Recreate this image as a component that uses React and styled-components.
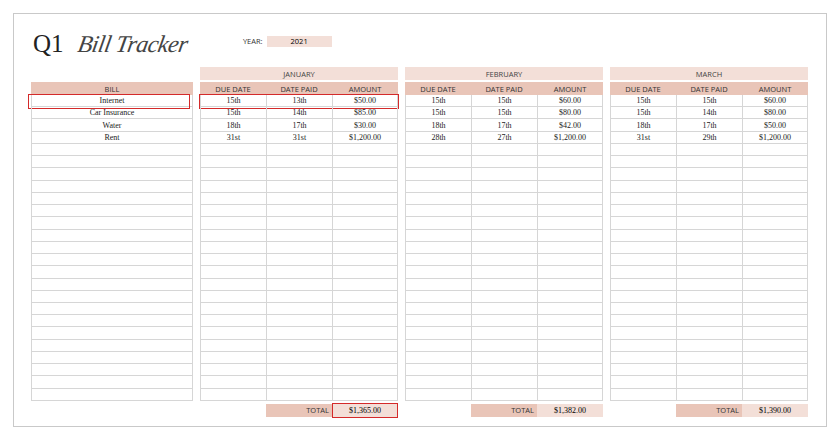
import styled, { createGlobalStyle } from 'styled-components'

const Global = createGlobalStyle`
  body { margin: 0; background: #fff; }
`

const ROWS = 25
const DARK = '#e9c5b8'
const LIGHT = '#f3dfd8'
const LINE = '#d6d6d6'

const months = [
  {
    name: 'JANUARY',
    rows: [['15th', '13th', '$50.00'], ['15th', '14th', '$85.00'], ['18th', '17th', '$30.00'], ['31st', '31st', '$1,200.00']],
    total: '$1,365.00',
    mark: true,
  },
  {
    name: 'FEBRUARY',
    rows: [['15th', '15th', '$60.00'], ['15th', '15th', '$80.00'], ['18th', '17th', '$42.00'], ['28th', '27th', '$1,200.00']],
    total: '$1,382.00',
  },
  {
    name: 'MARCH',
    rows: [['15th', '15th', '$60.00'], ['15th', '14th', '$80.00'], ['18th', '17th', '$50.00'], ['31st', '29th', '$1,200.00']],
    total: '$1,390.00',
  },
]
const bills = ['Internet', 'Car Insurance', 'Water', 'Rent']

const Frame = styled.div`
  margin: 13px;
  width: 795px;
  height: 412px;
  border: 1px solid #c9c9c9;
  padding: 0 0 0 17px;
  display: flex;
  flex-direction: column;
  font-family: 'Liberation Serif', serif;
`

const Header = styled.div`
  display: flex;
  align-items: center;
  height: 56px;
  padding-top: 2px;
`

const Q = styled.span`
  font-size: 25px;
  color: #222;
  margin-left: 2px;
`

const Script = styled.span`
  font-family: 'Liberation Serif', serif;
  font-style: italic;
  font-size: 24px;
  color: #444;
  margin-left: 14px;
  letter-spacing: -0.5px;
  transform: skewX(-10deg);
`

const YearLabel = styled.span`
  font-family: 'Open Sans', sans-serif;
  font-size: 7.5px;
  color: #333;
  margin-left: 56px;
  margin-top: -6px;
`

const YearBox = styled.span`
  font-family: 'Open Sans', sans-serif;
  font-size: 7.5px;
  background: ${LIGHT};
  width: 65px;
  height: 11px;
  line-height: 11px;
  text-align: center;
  margin-left: 4px;
  margin-top: -6px;
`

const Tables = styled.div`
  display: flex;
  gap: 7px;
  align-items: flex-start;
  margin-top: -5px;
`

const Table = styled.div`
  display: grid;
  grid-template-columns: ${p => p.$cols};
  width: ${p => p.$w}px;
`

const Band = styled.div`
  grid-column: 1 / -1;
  height: 13px;
  margin-bottom: 2px;
  background: ${p => (p.$blank ? 'transparent' : LIGHT)};
  font-family: 'Open Sans', sans-serif;
  font-size: 7.5px;
  color: #444;
  display: flex;
  align-items: center;
  justify-content: center;
`

const Head = styled.div`
  background: ${DARK};
  height: 13px;
  font-family: 'Open Sans', sans-serif;
  font-size: 7.5px;
  color: #333;
  display: flex;
  align-items: center;
  justify-content: center;
`

const Cell = styled.div`
  height: 12.24px;
  box-sizing: border-box;
  border-bottom: 1px solid ${LINE};
  border-left: 1px solid ${LINE};
  border-right: ${p => (p.$last ? `1px solid ${LINE}` : 'none')};
  font-size: 8px;
  color: #222;
  display: flex;
  align-items: center;
  justify-content: center;
  position: relative;
`

const Mark = styled.div`
  position: absolute;
  top: -1px;
  height: 13px;
  left: ${p => p.$l}px;
  right: ${p => p.$r}px;
  border: 1.5px solid #d42a2a;
  pointer-events: none;
`

const TotalRow = styled.div`
  display: grid;
  grid-template-columns: 66px 66px 66px;
  margin-top: 3px;
  height: 13px;
`

const TotalLabel = styled.div`
  grid-column: 2;
  background: ${DARK};
  font-family: 'Open Sans', sans-serif;
  font-size: 7.5px;
  display: flex;
  align-items: center;
  justify-content: flex-end;
  padding-right: 3px;
  color: #333;
`

const TotalValue = styled.div`
  background: ${LIGHT};
  font-size: 8px;
  display: flex;
  align-items: center;
  justify-content: center;
  position: relative;
`

const MonthCol = styled.div`
  display: flex;
  flex-direction: column;
`

function BillTable() {
  return (
    <Table $cols="1fr" $w={162}>
      <Band $blank />
      <Head>BILL</Head>
      {Array.from({ length: ROWS }).map((_, i) => (
        <Cell key={i} $last>
          {bills[i] || ''}
          {i === 0 && <Mark $l={-4} $r={2} />}
        </Cell>
      ))}
    </Table>
  )
}

function MonthTable({ m }) {
  return (
    <MonthCol>
      <Table $cols="66px 66px 66px" $w={198}>
        <Band>{m.name}</Band>
        <Head>DUE DATE</Head>
        <Head>DATE PAID</Head>
        <Head>AMOUNT</Head>
        {Array.from({ length: ROWS }).flatMap((_, i) =>
          [0, 1, 2].map(c => (
            <Cell key={`${i}-${c}`} $last={c === 2}>
              {m.rows[i] ? m.rows[i][c] : ''}
              {m.mark && i === 0 && c === 0 && <Mark $l={-2} $r={-133} />}
            </Cell>
          ))
        )}
      </Table>
      <TotalRow>
        <TotalLabel>TOTAL</TotalLabel>
        <TotalValue>
          {m.total}
          {m.mark && <Mark $l={0} $r={0} />}
        </TotalValue>
      </TotalRow>
    </MonthCol>
  )
}

export default function App() {
  return (
    <>
      <Global />
      <Frame>
        <Header>
          <Q>Q1</Q>
          <Script>Bill Tracker</Script>
          <YearLabel>YEAR:</YearLabel>
          <YearBox>2021</YearBox>
        </Header>
        <Tables>
          <BillTable />
          {months.map(m => (
            <MonthTable key={m.name} m={m} />
          ))}
        </Tables>
      </Frame>
    </>
  )
}
